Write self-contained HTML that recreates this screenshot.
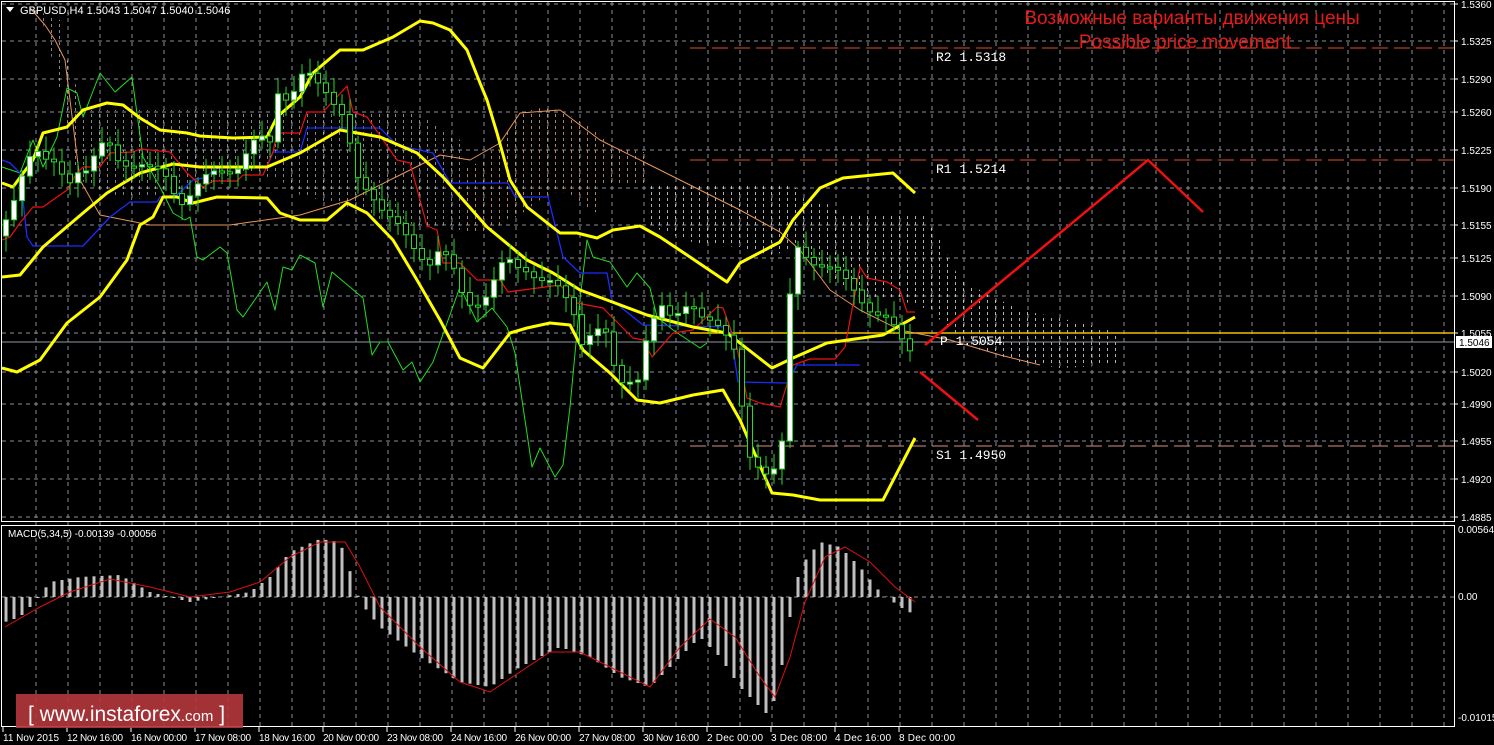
<!DOCTYPE html>
<html><head><meta charset="utf-8"><style>
html,body{margin:0;padding:0;background:#000;width:1494px;height:745px;overflow:hidden}
svg{display:block}
text{font-family:"Liberation Sans",sans-serif}
text.m{font-family:"Liberation Mono","DejaVu Sans Mono",monospace}
</style></head><body>
<svg id="s" width="1494" height="745" xmlns="http://www.w3.org/2000/svg">
<defs>
<pattern id="hat" width="8" height="6" patternUnits="userSpaceOnUse"><rect x="3" y="0" width="1" height="3" fill="#ddd"/></pattern>
<pattern id="hato" width="8" height="6" patternUnits="userSpaceOnUse"><rect x="3" y="0" width="1" height="3" fill="#e8a070"/></pattern>
</defs>
<rect width="1494" height="745" fill="#000"/>
<g id="grid"></g>
<polygon points="460,170 480,162 500,143 520,113 540,108 560,110 590,127 610,145 630,150 650,153 650,183 600,183 600,215 560,190 540,200 520,215 490,230 460,235" fill="url(#hato)" opacity="0.8"/>
<polygon points="650,183 790,183 805,197 830,205 845,215 925,215 935,230 950,260 960,280 1000,300 1020,310 1060,318 1110,330 1120,335 1120,365 1060,368 1020,362 980,350 950,330 930,310 900,300 870,300 850,290 820,270 800,250 770,255 740,247 700,245 660,230 650,225" fill="url(#hat)" opacity="0.8"/>
<polygon points="40,12 60,20 60,40 75,80 80,110 200,110 245,112 330,112 400,110 430,120 460,140 460,230 420,225 380,220 340,205 300,195 280,180 240,170 200,190 160,195 130,200 100,190 80,180 70,150 65,110" fill="url(#hat)" opacity="0.6"/>
<line x1="690" y1="48" x2="1454" y2="48" stroke="#e0502a" stroke-dasharray="16,6"/>
<line x1="690" y1="160" x2="1454" y2="160" stroke="#e0502a" stroke-dasharray="16,6"/>
<line x1="690" y1="446" x2="1454" y2="446" stroke="#d89080" stroke-dasharray="16,6"/>
<line x1="690" y1="333" x2="1454" y2="333" stroke="#f0c000" stroke-width="1.5"/>
<line x1="2" y1="342" x2="1454" y2="342" stroke="#9098a8"/>
<g id="lines"></g>
<g id="candles"></g>
<g id="macd"></g>
<polyline points="925,345 1148,160 1203,212" fill="none" stroke="#f01010" stroke-width="2.5"/>
<line x1="920" y1="372" x2="978" y2="420" stroke="#f01010" stroke-width="2.5"/>
<rect x="1.5" y="1.5" width="1453" height="520" fill="none" stroke="#fff"/>
<rect x="1.5" y="525.5" width="1453" height="201" fill="none" stroke="#fff"/>
<g id="axis" fill="#fff"></g>
<text x="20" y="14" fill="#fff" font-size="11">GBPUSD,H4  1.5043 1.5047 1.5040 1.5046</text>
<polygon points="6,7 14,7 10,12" fill="#fff"/>
<text x="8" y="537" fill="#fff" font-size="10">MACD(5,34,5) -0.00139 -0.00056</text>
<text x="1192" y="24" fill="#e51b1b" font-size="19" text-anchor="middle">Возможные варианты движения цены</text>
<text x="1185" y="48" fill="#e51b1b" font-size="19" text-anchor="middle">Possible price movement</text>
<text class="m" x="936" y="61" fill="#fff" font-size="13">R2 1.5318</text>
<text class="m" x="936" y="173" fill="#fff" font-size="13">R1 1.5214</text>
<text class="m" x="940" y="345" fill="#fff" font-size="13">P 1.5054</text>
<text class="m" x="936" y="459" fill="#fff" font-size="13">S1 1.4950</text>
<rect x="1456" y="336" width="36" height="12" fill="#fff"/>
<text x="1459" y="346" fill="#000" font-size="10">1.5046</text>
<rect x="16" y="694" width="227" height="34" fill="#b0363a" opacity="0.92"/>
<text x="28" y="721" fill="#fff" font-size="21">[  www.instaforex<tspan font-size="15">.com</tspan> ]</text>
</svg>
<script>
var NS="http://www.w3.org/2000/svg",s=document.getElementById('s');
function el(p,t,a){var e=document.createElementNS(NS,t);for(var k in a)e.setAttribute(k,a[k]);p.appendChild(e);return e}
var g=document.getElementById('grid');
for(var x=36;x<1454;x+=32){el(g,'line',{x1:x,y1:2,x2:x,y2:726,stroke:'#8a8f98','stroke-dasharray':'4,4'});}
var hy=[4,41,79,112,150,188,225,258,296,333,372,404,441,479,517],hl=['1.5360','1.5325','1.5290','1.5260','1.5225','1.5190','1.5155','1.5125','1.5090','1.5055','1.5020','1.4990','1.4955','1.4920','1.4885'];
var ax=document.getElementById('axis');
hy.forEach(function(y,i){el(g,'line',{x1:2,y1:y,x2:1454,y2:y,stroke:'#8a8f98','stroke-dasharray':'4,4'});el(ax,'line',{x1:1454,y1:y,x2:1458,y2:y,stroke:'#fff'});var t=el(ax,'text',{x:1461,y:y+4,'font-size':10});t.textContent=hl[i];});
el(g,'line',{x1:2,y1:597,x2:1454,y2:597,stroke:'#8a8f98','stroke-dasharray':'4,4'});
[[533,'0.00564'],[600,'0.00'],[721,'-0.01015']].forEach(function(a){var t=el(ax,'text',{x:1458,y:a[0],'font-size':10});t.textContent=a[1];});
var dl=['11 Nov 2015','12 Nov 16:00','16 Nov 00:00','17 Nov 08:00','18 Nov 16:00','20 Nov 00:00','23 Nov 08:00','24 Nov 16:00','26 Nov 00:00','27 Nov 08:00','30 Nov 16:00','2 Dec 00:00','3 Dec 08:00','4 Dec 16:00','8 Dec 00:00'];
dl.forEach(function(d,i){var x=3+i*64;el(ax,'line',{x1:x,y1:727,x2:x,y2:732,stroke:'#fff'});var t=el(ax,'text',{x:x,y:741,'font-size':10,textLength:56});t.textContent=d;});
function interp(pts,x){for(var i=1;i<pts.length;i++){if(x<=pts[i][0]){var a=pts[i-1],b=pts[i];return a[1]+(b[1]-a[1])*(x-a[0])/(b[0]-a[0]);}}return pts[pts.length-1][1];}
function poly(p,c,w){el(document.getElementById('lines'),'polyline',{points:p.map(function(q){return q.join(',')}).join(' '),fill:'none',stroke:c,'stroke-width':w,'stroke-linejoin':'round'});}
var up=[[2,183],[13,187],[33,160],[43,133],[67,127],[83,110],[107,103],[123,105],[140,118],[160,130],[187,133],[200,136],[233,138],[267,137],[277,117],[300,97],[313,73],[340,50],[363,50],[393,37],[420,21],[433,23],[450,30],[467,50],[480,83],[487,100],[497,133],[510,180],[527,207],[560,233],[577,233],[597,238],[613,230],[640,226],[660,237],[687,255],[727,282],[740,263],[780,242],[793,220],[820,188],[843,178],[893,173],[915,193]];
var mid=[[2,277],[20,275],[43,247],[83,213],[107,193],[140,173],[173,164],[200,167],[267,167],[300,153],[340,130],[380,137],[417,153],[443,177],[487,227],[527,260],[553,273],[580,290],[607,300],[647,315],[693,327],[727,333],[772,368],[793,358],[827,343],[883,335],[915,317]];
var lo=[[2,368],[17,372],[40,360],[67,323],[100,297],[127,260],[140,225],[153,217],[163,197],[177,197],[193,203],[217,197],[267,198],[280,213],[300,220],[327,220],[347,203],[367,213],[393,240],[417,280],[440,320],[460,358],[483,368],[510,333],[527,328],[550,323],[570,325],[583,350],[610,373],[637,400],[660,403],[693,395],[723,390],[740,420],[772,493],[793,495],[820,500],[883,500],[915,438]];
var grn=[[2,167],[20,173],[33,140],[43,167],[57,137],[67,88],[77,93],[83,117],[100,73],[115,92],[132,77],[143,157],[160,187],[173,213],[185,220],[190,217],[197,257],[203,260],[220,247],[227,253],[237,310],[243,317],[267,282],[275,310],[283,267],[292,270],[300,255],[315,263],[323,307],[332,272],[363,298],[372,355],[380,342],[388,342],[403,370],[412,362],[420,382],[433,362],[460,287],[477,322],[492,308],[507,327],[515,353],[532,467],[540,448],[555,477],[563,465],[570,407],[580,300],[587,240],[593,257],[610,262],[627,287],[637,273],[650,288],[657,317],[673,330],[700,348],[707,343]];
var red=[[2,240],[10,237],[20,223],[33,207],[43,207],[67,190],[77,173],[83,167],[100,167],[110,153],[133,152],[140,149],[170,152],[187,173],[203,187],[213,181],[237,181],[243,175],[263,175],[273,152],[277,133],[300,133],[307,112],[323,112],[347,86],[353,112],[367,117],[397,160],[410,163],[427,226],[437,230],[443,263],[460,263],[477,280],[500,280],[508,292],[560,285],[577,303],[603,308],[633,338],[643,340],[652,357],[673,333],[693,330],[717,307],[723,308],[737,347],[747,398],[760,403],[780,407],[793,365],[810,359],[835,359],[845,347],[860,267],[867,278],[887,282],[900,290],[907,312],[915,312]];
var blu=[[2,160],[10,163],[20,173],[27,237],[33,246],[83,246],[110,217],[130,202],[157,202],[160,197],[177,195],[193,180],[203,178],[220,167],[267,167],[273,152],[300,152],[307,128],[380,128],[397,145],[433,153],[450,183],[508,183],[515,197],[548,197],[563,257],[580,273],[607,273],[612,300],[643,325],[730,327],[738,382],[787,383],[797,365],[860,365]];
var ora=[[30,8],[45,25],[55,40],[65,60],[70,100],[75,140],[80,180],[100,215],[150,225],[230,225],[300,215],[350,200],[400,175],[440,155],[470,160],[500,143],[520,113],[560,110],[600,140],[650,165],[700,190],[740,210],[780,232],[800,250],[830,290],[860,310],[900,330],[950,340],[1000,355],[1040,365]];
poly(ora,'#e8955a',1);poly(grn,'#22dd22',1);poly(blu,'#1a2cff',1.3);poly(red,'#ee1010',1.2);
poly(up,'#ffff00',3);poly(mid,'#ffff00',3);poly(lo,'#ffff00',3);
var path=[[3,230],[13,210],[27,160],[35,140],[43,155],[50,160],[57,170],[67,190],[73,180],[80,165],[87,165],[93,155],[100,145],[107,150],[113,152],[120,168],[127,162],[140,160],[153,172],[167,180],[180,200],[200,185],[220,170],[240,165],[250,150],[260,140],[270,140],[275,85],[290,100],[305,75],[315,80],[325,85],[340,110],[347,130],[355,180],[375,195],[395,225],[410,245],[430,260],[440,250],[455,275],[465,300],[480,300],[490,295],[500,270],[510,260],[525,265],[540,285],[560,287],[573,300],[578,345],[590,340],[605,330],[618,375],[640,385],[645,350],[660,300],[673,312],[690,310],[700,320],[715,315],[725,330],[735,355],[740,400],[750,460],[760,465],[770,470],[780,460],[785,420],[790,300],[797,250],[820,262],[843,280],[857,290],[875,315],[900,333],[906,345],[915,345]];
var cg=document.getElementById('candles'),prev=interp(path,0);
for(var x=6;x<=914;x+=8){var c=interp(path,x)+(Math.sin(x*1.7)*6),o=prev;prev=c;var t=Math.min(o,c),b=Math.max(o,c);if(b-t<2)b=t+2;
el(cg,'line',{x1:x,y1:t-6-Math.abs(Math.sin(x))*10,x2:x,y2:b+6+Math.abs(Math.cos(x))*10,stroke:'#22dd22'});
el(cg,'rect',{x:x-2.5,y:t,width:5,height:b-t,fill:c<o?'#fff':'#000',stroke:'#22dd22'});}
var hist=[[5,-25],[20,-20],[35,-5],[50,15],[80,20],[120,22],[150,5],[190,-5],[220,0],[250,5],[270,20],[290,45],[320,58],[340,55],[352,20],[360,-5],[380,-30],[420,-60],[460,-85],[490,-90],[520,-70],[560,-50],[590,-60],[620,-80],[650,-90],[680,-60],[700,-40],[720,-60],[740,-90],[760,-110],[770,-120],[780,-80],[790,-20],[800,30],[820,55],[840,50],[860,30],[880,5],[900,-10],[915,-18]];
var sig=[[5,-30],[40,-10],[70,5],[110,18],[150,10],[190,0],[230,5],[260,15],[290,40],[320,55],[345,55],[360,30],[380,-10],[420,-50],[460,-85],[490,-95],[520,-75],[550,-55],[580,-55],[620,-75],[650,-90],[680,-50],[710,-22],[735,-40],[760,-80],[775,-100],[790,-60],[805,-5],[825,40],[845,50],[870,35],[895,10],[915,-5]];
var mg=document.getElementById('macd');
for(var x=6;x<=914;x+=8){var v=interp(hist,x);el(mg,'rect',{x:x-1.5,y:v>0?597-v:597,width:3,height:Math.abs(v),fill:'#c0c0c0'});}
el(mg,'polyline',{points:sig.map(function(q){return q[0]+','+(597-q[1])}).join(' '),fill:'none',stroke:'#e01010','stroke-width':1});
</script>
</body></html>
